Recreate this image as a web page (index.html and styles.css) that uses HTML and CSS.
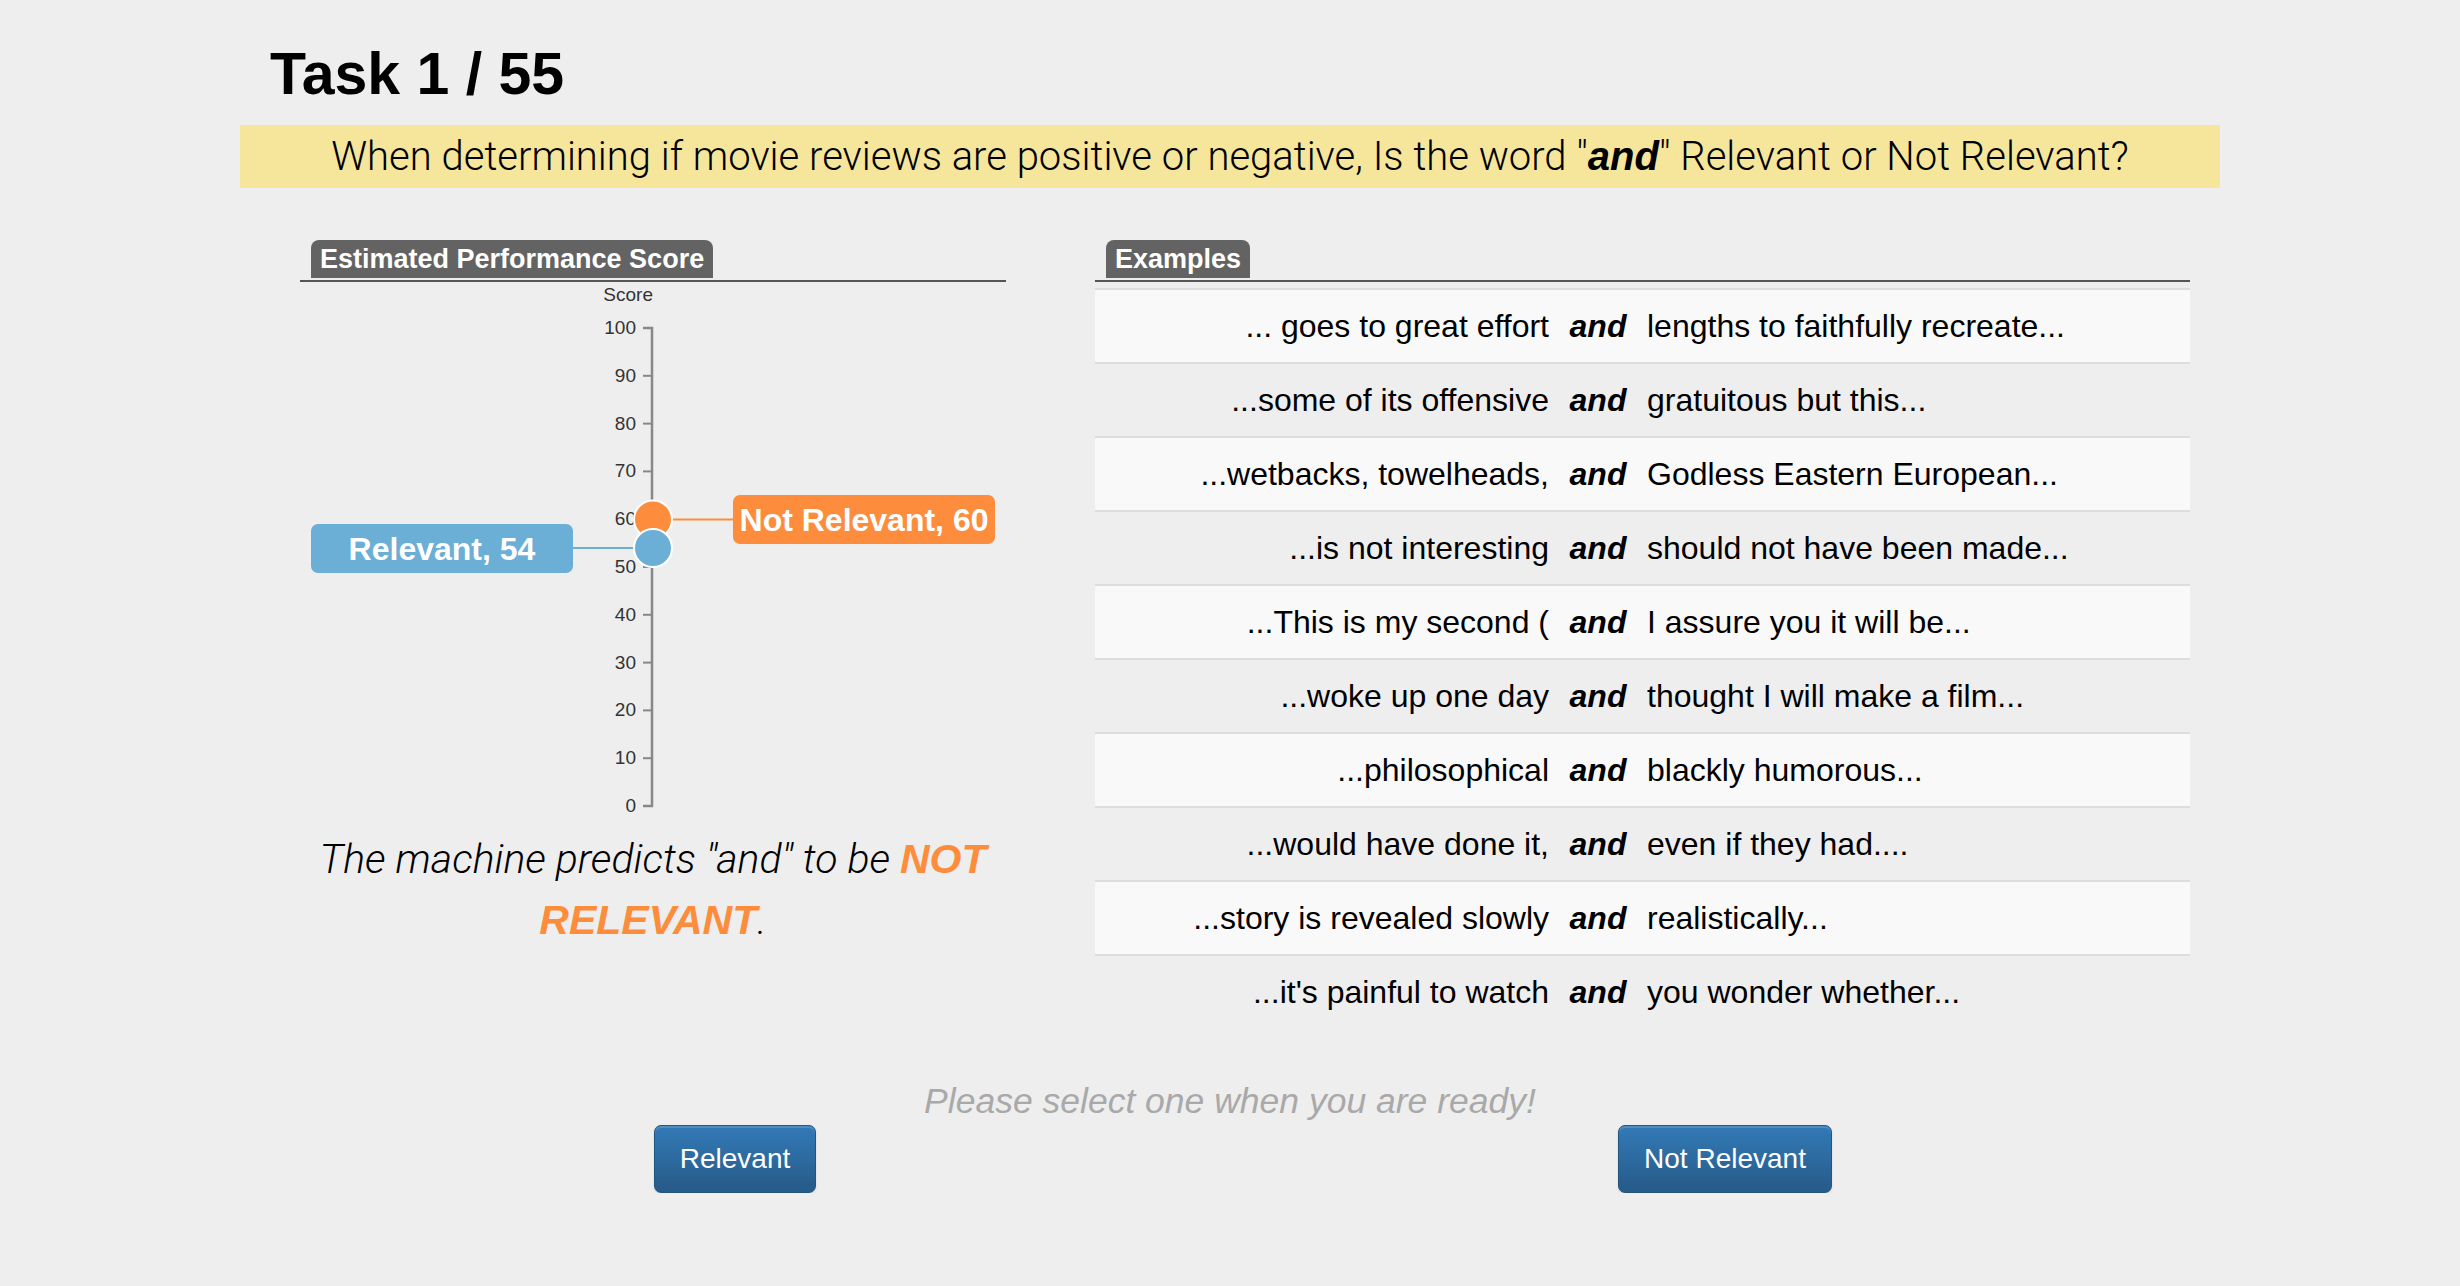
FILE: index.html
```html
<!DOCTYPE html>
<html lang="en">
<head>
<meta charset="utf-8">
<title>Task 1 / 55</title>
<link rel="stylesheet" href="styles.css">
</head>
<body>
<div class="page">
  <h1 class="title">Task 1 / 55</h1>
  <div class="question">When determining if movie reviews are positive or negative, Is the word "<b>and</b>" Relevant or Not Relevant?</div>

  <div class="main">
    <section class="chart-panel">
      <div class="panel-head"><span class="tab">Estimated Performance Score</span></div>
      <svg class="chart" width="706" height="540" viewBox="0 0 706 540">
        <text class="axis-title" x="353" y="19" text-anchor="end">Score</text>
        <path class="domain" d="M343,46 H352 V524 H343"/>
        <g class="ticks">
          <line x1="343" x2="352" y1="524" y2="524"/><text x="336" y="530">0</text>
          <line x1="343" x2="352" y1="476.2" y2="476.2"/><text x="336" y="482.2">10</text>
          <line x1="343" x2="352" y1="428.4" y2="428.4"/><text x="336" y="434.4">20</text>
          <line x1="343" x2="352" y1="380.6" y2="380.6"/><text x="336" y="386.6">30</text>
          <line x1="343" x2="352" y1="332.8" y2="332.8"/><text x="336" y="338.8">40</text>
          <line x1="343" x2="352" y1="285" y2="285"/><text x="336" y="291">50</text>
          <line x1="343" x2="352" y1="237.2" y2="237.2"/><text x="336" y="243.2">60</text>
          <line x1="343" x2="352" y1="189.4" y2="189.4"/><text x="336" y="195.4">70</text>
          <line x1="343" x2="352" y1="141.6" y2="141.6"/><text x="336" y="147.6">80</text>
          <line x1="343" x2="352" y1="93.8" y2="93.8"/><text x="336" y="99.8">90</text>
          <line x1="343" x2="352" y1="46" y2="46"/><text x="336" y="52">100</text>
        </g>
        <line class="link-orange" x1="353" y1="237.5" x2="434" y2="237.5"/>
        <line class="link-blue" x1="272" y1="266" x2="353" y2="266"/>
        <rect class="box-orange" x="433" y="213" width="262" height="49" rx="7"/>
        <text class="box-label" x="564" y="249" text-anchor="middle">Not Relevant, 60</text>
        <rect class="box-blue" x="11" y="242" width="262" height="49" rx="7"/>
        <text class="box-label" x="142" y="278" text-anchor="middle">Relevant, 54</text>
        <circle class="dot-orange" cx="353" cy="237.5" r="19"/>
        <circle class="dot-blue" cx="353" cy="266" r="19"/>
      </svg>
      <p class="prediction">The machine predicts "and" to be <strong>NOT</strong> <strong>RELEVANT</strong>.</p>
    </section>

    <section class="examples-panel">
      <div class="panel-head"><span class="tab">Examples</span></div>
      <div class="examples">
        <div class="ex-row"><span class="pre">... goes to great effort</span><span class="kw">and</span><span class="post">lengths to faithfully recreate...</span></div>
        <div class="ex-row"><span class="pre">...some of its offensive</span><span class="kw">and</span><span class="post">gratuitous but this...</span></div>
        <div class="ex-row"><span class="pre">...wetbacks, towelheads,</span><span class="kw">and</span><span class="post">Godless Eastern European...</span></div>
        <div class="ex-row"><span class="pre">...is not interesting</span><span class="kw">and</span><span class="post">should not have been made...</span></div>
        <div class="ex-row"><span class="pre">...This is my second (</span><span class="kw">and</span><span class="post">I assure you it will be...</span></div>
        <div class="ex-row"><span class="pre">...woke up one day</span><span class="kw">and</span><span class="post">thought I will make a film...</span></div>
        <div class="ex-row"><span class="pre">...philosophical</span><span class="kw">and</span><span class="post">blackly humorous...</span></div>
        <div class="ex-row"><span class="pre">...would have done it,</span><span class="kw">and</span><span class="post">even if they had....</span></div>
        <div class="ex-row"><span class="pre">...story is revealed slowly</span><span class="kw">and</span><span class="post">realistically...</span></div>
        <div class="ex-row"><span class="pre">...it's painful to watch</span><span class="kw">and</span><span class="post">you wonder whether...</span></div>
      </div>
    </section>
  </div>

  <p class="prompt">Please select one when you are ready!</p>
  <div class="actions">
    <div class="action-col"><button class="btn" type="button">Relevant</button></div>
    <div class="action-col"><button class="btn" type="button">Not Relevant</button></div>
  </div>
</div>
</body>
</html>
```

FILE: styles.css
```css
* { box-sizing: border-box; }
html, body { margin: 0; padding: 0; background: #eeeeee; }
body { font-family: "Liberation Sans", Arial, sans-serif; color: #000; }

.page { width: 1980px; margin: 0 auto; padding-top: 42px; }

.title {
  margin: 0 0 19px 30px;
  font-size: 59px;
  line-height: 64px;
  font-weight: 700;
}

.question {
  height: 63px;
  background: #f5e69c;
  text-align: center;
  font-family: Roboto, "Liberation Sans", sans-serif;
  font-weight: 300;
  font-size: 40px;
  line-height: 63px;
  white-space: nowrap;
}
.question b { font-family: "Liberation Sans", sans-serif; font-weight: 700; font-style: italic; }

.main { display: flex; margin-top: 52px; padding: 0 30px 0 60px; gap: 89px; }
.chart-panel { width: 706px; flex: none; }
.examples-panel { flex: 1; min-width: 0; }

.panel-head {
  display: flex;
  align-items: flex-start;
  height: 42px;
  padding-left: 11px;
  border-bottom: 2px solid #555;
}
.tab {
  display: block;
  height: 38px;
  padding: 0 9px;
  background: #636363;
  color: #fff;
  font-weight: 700;
  font-size: 27px;
  line-height: 38px;
  border-radius: 8px 8px 0 0;
  white-space: nowrap;
}

.chart { display: block; font-family: "Liberation Sans", Arial, sans-serif; }
.chart .axis-title { font-size: 19px; fill: #333; }
.chart .domain { fill: none; stroke: #888; stroke-width: 2.5; }
.chart .ticks line { stroke: #888; stroke-width: 2; }
.chart .ticks text { font-size: 19px; fill: #333; text-anchor: end; }
.chart .link-orange { stroke: #fd8d3c; stroke-width: 2; }
.chart .link-blue { stroke: #6baed6; stroke-width: 2; }
.chart .box-orange { fill: #fd8d3c; }
.chart .box-blue { fill: #6baed6; }
.chart .box-label { fill: #fff; font-size: 32px; font-weight: 700; }
.chart .dot-orange { fill: #fd8d3c; stroke: #fff; stroke-width: 2; }
.chart .dot-blue { fill: #6baed6; stroke: #fff; stroke-width: 2; }

.prediction {
  margin: 7px 0 0;
  text-align: center;
  font-family: Roboto, "Liberation Sans", sans-serif;
  font-weight: 300;
  font-style: italic;
  font-size: 41px;
  line-height: 61px;
}
.prediction strong { color: #fd8d3c; font-family: "Liberation Sans", sans-serif; font-weight: 700; }

.examples { margin-top: 6px; }
.ex-row {
  display: grid;
  grid-template-columns: 462px 82px 1fr;
  align-items: center;
  height: 74px;
  border-top: 2px solid #dddddd;
  font-size: 32px;
  white-space: nowrap;
}
.ex-row:nth-child(odd) { background: #f9f9f9; }
.pre { text-align: right; padding-right: 8px; }
.kw { text-align: center; font-weight: 700; font-style: italic; }
.post { padding-left: 8px; }

.prompt {
  margin: 49px 0 0;
  text-align: center;
  font-style: italic;
  color: #a9a9a9;
  font-size: 35.5px;
  line-height: 48px;
}

.actions { display: grid; grid-template-columns: 1fr 1fr; justify-items: center; }
.btn {
  font-family: "Liberation Sans", Arial, sans-serif;
  font-size: 28px;
  line-height: 40px;
  padding: 13px 25px;
  color: #fff;
  border: 1px solid #245580;
  border-radius: 7px;
  background: linear-gradient(to bottom, #337ab7 0%, #265a88 100%);
  box-shadow: inset 0 2px 0 rgba(255,255,255,.15), 0 1px 2px rgba(0,0,0,.12);
  cursor: pointer;
}
```
